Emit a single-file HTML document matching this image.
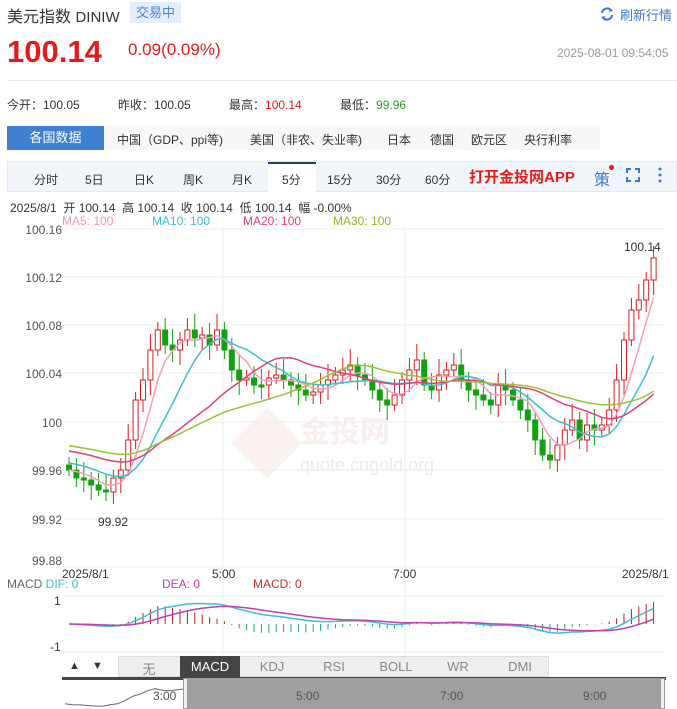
<!DOCTYPE html>
<html><head><meta charset="utf-8"><style>
*{margin:0;padding:0;box-sizing:border-box}
body{width:677px;height:709px;overflow:hidden;background:#fff;font-family:"Liberation Sans","Noto Sans CJK SC",sans-serif;color:#333;position:relative}
.a{position:absolute;white-space:nowrap}
</style></head><body>
<div class="a" style="left:7px;top:3px;font-size:16px;color:#333">美元指数 <span style="font-size:15px">DINIW</span></div>
<div class="a" style="left:130px;top:2px;width:51px;height:21px;background:#e3eefa;color:#4a86d0;font-size:13px;text-align:center;line-height:21px">交易中</div>
<svg class="a" style="left:599px;top:6px" width="16" height="16" viewBox="0 0 16 16"><path d="M3 7A5 5 0 0 1 12 4.5M13 9A5 5 0 0 1 4 11.5" fill="none" stroke="#3a78d0" stroke-width="2"/><path d="M11 2L14 5L10 6Z M5 14L2 11L6 10Z" fill="#3a78d0"/></svg>
<div class="a" style="left:620px;top:5px;font-size:13px;color:#3a78d0">刷新行情</div>
<div class="a" style="left:7px;top:34px;font-size:31px;font-weight:bold;color:#e31b1b">100.14</div>
<div class="a" style="left:128px;top:40px;font-size:17px;color:#e31b1b">0.09(0.09%)</div>
<div class="a" style="left:557px;top:46px;font-size:12px;color:#999">2025-08-01 09:54:05</div>
<div class="a" style="left:7px;top:80px;width:670px;height:1px;background:#e6e6e6"></div>
<div class="a" style="left:7px;top:96px;font-size:12px">今开：100.05</div>
<div class="a" style="left:118px;top:96px;font-size:12px">昨收：100.05</div>
<div class="a" style="left:229px;top:96px;font-size:12px">最高：<span style="color:#e31b1b">100.14</span></div>
<div class="a" style="left:340px;top:96px;font-size:12px">最低：<span style="color:#2a9a2a">99.96</span></div>
<div class="a" style="left:7px;top:126px;width:97px;height:24px;background:#3f7fcf;color:#fff;font-size:13px;text-align:center;line-height:24px">各国数据</div>
<div class="a" style="left:104px;top:126px;width:496px;height:24px;background:#f7f7f7"></div>
<div class="a" style="left:117px;top:131px;font-size:12px">中国（GDP、ppi等)</div>
<div class="a" style="left:250px;top:131px;font-size:12px">美国（非农、失业率)</div>
<div class="a" style="left:387px;top:131px;font-size:12px">日本</div>
<div class="a" style="left:430px;top:131px;font-size:12px">德国</div>
<div class="a" style="left:471px;top:131px;font-size:12px">欧元区</div>
<div class="a" style="left:524px;top:131px;font-size:12px">央行利率</div>
<div class="a" style="left:7px;top:161px;width:670px;height:31px;background:#f2f6fb;border:1px solid #e3e9f0"></div>
<div class="a" style="left:268px;top:162px;width:48px;height:30px;background:#fff;border-top:2px solid #1f3f7a"></div>
<div class="a" style="left:34px;top:171px;font-size:12px;word-spacing:0">分时</div>
<div class="a" style="left:85px;top:171px;font-size:12px">5日</div>
<div class="a" style="left:134px;top:171px;font-size:12px">日K</div>
<div class="a" style="left:183px;top:171px;font-size:12px">周K</div>
<div class="a" style="left:232px;top:171px;font-size:12px">月K</div>
<div class="a" style="left:282px;top:171px;font-size:12px">5分</div>
<div class="a" style="left:327px;top:171px;font-size:12px">15分</div>
<div class="a" style="left:376px;top:171px;font-size:12px">30分</div>
<div class="a" style="left:425px;top:171px;font-size:12px">60分</div>
<div class="a" style="left:469px;top:166px;font-size:15px;font-weight:bold;color:#e31b1b">打开金投网APP</div>
<div class="a" style="left:594px;top:166px;font-size:16px;color:#3a78d0">策</div>
<div class="a" style="left:609px;top:165px;width:5px;height:5px;border-radius:50%;background:#e31b1b"></div>
<svg class="a" style="left:626px;top:168px" width="14" height="14"><path d="M1 5V1H5M9 1H13V5M13 9V13H9M5 13H1V9" fill="none" stroke="#3a78d0" stroke-width="2"/></svg>
<svg class="a" style="left:657px;top:167px" width="6" height="16"><circle cx="3" cy="2" r="1.5" fill="#3a78d0"/><circle cx="3" cy="8" r="1.5" fill="#3a78d0"/><circle cx="3" cy="14" r="1.5" fill="#3a78d0"/></svg>
<div class="a" style="left:10px;top:199px;font-size:12px">2025/8/1 &nbsp;开 100.14 &nbsp;高 100.14 &nbsp;收 100.14 &nbsp;低 100.14 &nbsp;幅 -0.00%</div>
<div class="a" style="left:62px;top:214px;font-size:12px;color:#f09ab8">MA5: 100</div>
<div class="a" style="left:152px;top:214px;font-size:12px;color:#3cc0d0">MA10: 100</div>
<div class="a" style="left:243px;top:214px;font-size:12px;color:#e0407a">MA20: 100</div>
<div class="a" style="left:333px;top:214px;font-size:12px;color:#90b828">MA30: 100</div>
<div class="a" style="left:300px;top:407px;font-size:30px;color:rgba(220,150,150,0.15);font-weight:bold">金投网</div>
<div class="a" style="left:300px;top:455px;font-size:18px;color:rgba(180,180,180,0.25)">quote.cngold.org</div>
<div class="a" style="left:242px;top:418px;width:50px;height:50px;transform:rotate(45deg);background:rgba(230,150,150,0.12)"></div>
<svg id="ch" class="a" style="left:0;top:0" width="677" height="709"></svg>
<div class="a" style="left:7px;top:577px;font-size:12px;color:#666">MACD <span style="color:#3cc0d0">DIF: 0</span></div>
<div class="a" style="left:162px;top:577px;font-size:12px;color:#c040b0">DEA: 0</div>
<div class="a" style="left:253px;top:577px;font-size:12px;color:#c03030">MACD: 0</div>
<div class="a" style="left:62px;top:567px;font-size:12px;color:#333">2025/8/1</div>
<div class="a" style="left:212px;top:567px;font-size:12px">5:00</div>
<div class="a" style="left:393px;top:567px;font-size:12px">7:00</div>
<div class="a" style="left:622px;top:567px;font-size:12px">2025/8/1</div>
<div class="a" style="left:54px;top:594px;font-size:12px;color:#333">1</div>
<div class="a" style="left:50px;top:640px;font-size:12px;color:#333">-1</div>
<div class="a" style="left:63px;top:656px;width:23px;height:21px;text-align:center;font-size:11px;line-height:21px">▲</div>
<div class="a" style="left:86px;top:656px;width:23px;height:21px;text-align:center;font-size:11px;line-height:21px">▼</div>
<div class="a" style="left:118px;top:656px;width:431px;height:21px;background:#eee;border:1px solid #ddd"></div>
<div class="a" style="left:118px;top:659px;width:62px;text-align:center;font-size:13px;color:#888">无</div>
<div class="a" style="left:180px;top:656px;width:60px;height:21px;background:#444;color:#fff;text-align:center;font-size:13px;line-height:21px">MACD</div>
<div class="a" style="left:242px;top:659px;width:60px;text-align:center;font-size:13px;color:#888">KDJ</div>
<div class="a" style="left:304px;top:659px;width:60px;text-align:center;font-size:13px;color:#888">RSI</div>
<div class="a" style="left:366px;top:659px;width:60px;text-align:center;font-size:13px;color:#888">BOLL</div>
<div class="a" style="left:428px;top:659px;width:60px;text-align:center;font-size:13px;color:#888">WR</div>
<div class="a" style="left:490px;top:659px;width:60px;text-align:center;font-size:13px;color:#888">DMI</div>
<div class="a" style="left:62px;top:677px;width:604px;height:3px;background:#444"></div>
<div class="a" style="left:187px;top:678px;width:473px;height:31px;background:#a0a0a0"></div>
<div class="a" style="left:183px;top:678px;width:5px;height:31px;background:#eee;border:1px solid #999"></div>
<div class="a" style="left:660px;top:678px;width:5px;height:31px;background:#eee;border:1px solid #999"></div>
<div class="a" style="left:153px;top:689px;font-size:12px;color:#555">3:00</div>
<div class="a" style="left:296px;top:689px;font-size:12px;color:#555">5:00</div>
<div class="a" style="left:440px;top:689px;font-size:12px;color:#555">7:00</div>
<div class="a" style="left:583px;top:689px;font-size:12px;color:#555">9:00</div>
<script>
var c=[470,478,480,485,490,492,478,470,440,400,380,350,330,345,350,340,330,338,335,345,330,350,370,380,378,385,385,378,375,380,385,390,395,392,385,380,375,370,365,375,380,390,400,405,395,380,370,360,385,390,375,370,365,380,390,395,400,405,385,390,400,410,420,440,455,460,445,430,420,440,425,430,425,410,380,340,310,300,280,258];
var s='',x0=66,dx=7.4;
function L(y,col){s+='<line x1="63" x2="665" y1="'+y+'" y2="'+y+'" stroke="'+col+'"/>';}
[229,277,325,373,422,470,519,567].forEach(function(y){L(y,'#eee')});
s+='<line x1="223" x2="223" y1="229" y2="675" stroke="#eee"/><line x1="405" x2="405" y1="229" y2="675" stroke="#eee"/>';
s+='<line x1="63" x2="665" y1="596" y2="596" stroke="#eee"/><line x1="63" x2="665" y1="652" y2="652" stroke="#eee"/>';
var lab=['100.16','100.12','100.08','100.04','100','99.96','99.92','99.88'];
[229,277,325,373,422,470,519,560].forEach(function(y,i){s+='<text x="62" y="'+(y+5)+'" text-anchor="end" font-size="12" fill="#555" font-family="Liberation Sans">'+lab[i]+'</text>'});
for(var i=0;i<c.length;i++){var o=i?c[i-1]:465,cl=c[i],x=x0+i*dx,up=cl<o,col=up?'#d42020':'#10a010';var t=Math.min(o,cl),b=Math.max(o,cl);if(b-t<2)b=t+2;
s+='<line x1="'+(x+3)+'" x2="'+(x+3)+'" y1="'+(t-8-(i%3)*4)+'" y2="'+(b+6+(i%4)*3)+'" stroke="'+col+'"/>';
s+='<rect x="'+(x+.5)+'" y="'+t+'" width="5" height="'+(b-t)+'" fill="'+(up?'#fff':col)+'" stroke="'+col+'"/>';}
function ma(n,col,off){var p='';for(var i=0;i<c.length;i++){var a=0,k=0;for(var j=Math.max(0,i-n+1);j<=i;j++){a+=c[j];k++;}var v=(a+(n-k)*(off))/n;p+=(i?'L':'M')+(x0+3+i*dx).toFixed(1)+' '+v.toFixed(1);}s+='<path d="'+p+'" fill="none" stroke="'+col+'" stroke-width="1.5"/>';}
ma(5,'#f4a0bc',470);ma(10,'#3cc0d0',462);ma(20,'#e0407a',450);ma(30,'#a0c030',445);
s+='<text x="98" y="526" font-size="12" fill="#333" font-family="Liberation Sans">99.92</text><text x="624" y="251" font-size="12" fill="#333" font-family="Liberation Sans">100.14</text>';
var e1=c[0],e2=c[0],dea=0,pd='',pe='';
for(var i=0;i<c.length;i++){e1+=(c[i]-e1)*2/13;e2+=(c[i]-e2)*2/27;var dif=(e2-e1)*0.55;dea+=(dif-dea)*0.2;var h=(dif-dea)*2,x=x0+3+i*dx,z=624;
s+='<line x1="'+x+'" x2="'+x+'" y1="'+z+'" y2="'+(z-h)+'" stroke="'+(h>0?'#b02020':'#20a080')+'"/>';
pd+=(i?'L':'M')+x.toFixed(1)+' '+(z-dif).toFixed(1);pe+=(i?'L':'M')+x.toFixed(1)+' '+(z-dea).toFixed(1);}
s+='<path d="'+pd+'" fill="none" stroke="#3cc0d0" stroke-width="1.5"/><path d="'+pe+'" fill="none" stroke="#c040b0" stroke-width="1.5"/>';
var pn='';for(var i=0;i<c.length;i++){var x=65+i*7.5,y=680+(c[i]-250)/240*26;pn+=(i?'L':'M')+x.toFixed(1)+' '+y.toFixed(1);}
s+='<path d="'+pn+'" fill="none" stroke="#666"/>';
document.getElementById('ch').innerHTML=s;
</script>
</body></html>
